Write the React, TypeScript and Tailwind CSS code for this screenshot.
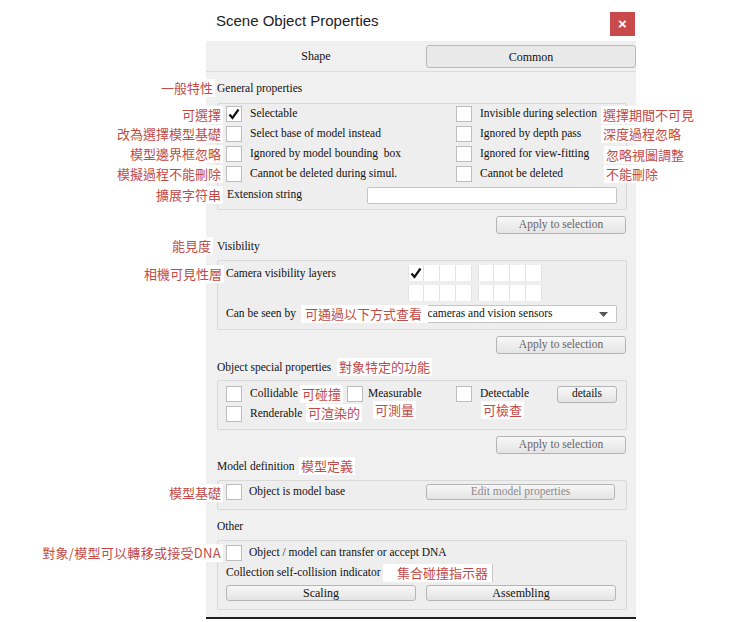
import { ReactNode } from "react";

function Check() {
  return (
    <svg width="12" height="12" viewBox="0 0 12 12">
      <path d="M1.5 6.5 L4.5 10 L10.5 1.5" fill="none" stroke="#111" strokeWidth="2.2" />
    </svg>
  );
}

function Box({ checked }: { checked?: boolean }) {
  return (
    <div className="w-4 h-4 shrink-0 bg-white border border-[#bdbdbd] flex items-center justify-center">
      {checked && <Check />}
    </div>
  );
}

function Btn({ children, className }: { children: ReactNode; className: string }) {
  return (
    <div
      className={
        "flex items-center justify-center border border-[#b4b4b4] rounded-[3px] bg-gradient-to-b from-[#f7f7f7] to-[#e4e4e4] leading-none " +
        className
      }
    >
      {children}
    </div>
  );
}

function Note({ children, className }: { children: ReactNode; className: string }) {
  return (
    <div
      className={
        "absolute bg-white text-[#c24b48] text-[13px] leading-[18px] px-[2px] whitespace-nowrap [font-family:'Noto_Sans_CJK_TC','Liberation_Sans',sans-serif] " +
        className
      }
    >
      {children}
    </div>
  );
}

function Layers() {
  const row = (first: boolean) => (
    <div className="flex gap-[6px]">
      {[0, 1].map((b) => (
        <div key={b} className="flex">
          {[0, 1, 2, 3].map((i) => (
            <div
              key={i}
              className="w-4 h-4 bg-white border-r border-[#e2e2e2] first:border-l flex items-center justify-center"
            >
              {first && b === 0 && i === 0 && <Check />}
            </div>
          ))}
        </div>
      ))}
    </div>
  );
  return (
    <div className="flex flex-col gap-[4px]">
      {row(true)}
      {row(false)}
    </div>
  );
}

export default function App() {
  const group = "border border-[#d9d9d9] rounded-[2px] bg-[#eeeeee]";
  return (
    <div className="relative w-[749px] h-[622px] bg-white overflow-hidden [font-family:'Liberation_Serif',serif] text-[11.5px] text-[#111]">
      <div className="ml-[206px] w-[430px] flex flex-col">
        <div className="h-[41px] flex items-start justify-between">
          <div className="pt-[11px] pl-[10px] text-[15px] leading-[20px] text-[#222] [font-family:'Liberation_Sans',sans-serif]">
            Scene Object Properties
          </div>
          <div className="mt-[12px] mr-px w-[25px] h-[24px] bg-[#c94a4b] text-white flex items-center justify-center text-[15px] font-bold [font-family:'Liberation_Sans',sans-serif]">
            ×
          </div>
        </div>

        <div className="bg-[#f0f0f0] border-b-2 border-[#1f1f1f] flex flex-col">
          <div className="h-[31px] flex border-b border-[#dcdcdc]">
            <div className="w-[220px] flex items-center justify-center text-[12px]">Shape</div>
            <Btn className="w-[210px] h-[23px] mt-[4px] text-[12px] bg-none bg-[#e9e9e9] border-[#b9b9b9]">
              Common
            </Btn>
          </div>

          <div className="pl-[11px] pr-[9px] flex flex-col">
            <div className="mt-[8px] h-[16px] leading-[16px]">General properties</div>
            <div className={group + " mt-[7px] h-[107px] pl-[8px] pr-[9px] flex flex-col"}>
              <div className="grid grid-cols-[230px_1fr]">
                <div className="h-[20px] flex items-center gap-[8px]"><Box checked />Selectable</div>
                <div className="h-[20px] flex items-center gap-[8px]"><Box />Invisible during selection</div>
                <div className="h-[20px] flex items-center gap-[8px]"><Box />Select base of model instead</div>
                <div className="h-[20px] flex items-center gap-[8px]"><Box />Ignored by depth pass</div>
                <div className="h-[20px] flex items-center gap-[8px]"><Box />Ignored by model bounding&nbsp; box</div>
                <div className="h-[20px] flex items-center gap-[8px]"><Box />Ignored for view-fitting</div>
                <div className="h-[20px] flex items-center gap-[8px]"><Box />Cannot be deleted during simul.</div>
                <div className="h-[20px] flex items-center gap-[8px]"><Box />Cannot be deleted</div>
              </div>
              <div className="h-[20px] mt-px flex items-center justify-between pl-px">
                <span>Extension string</span>
                <div className="w-[250px] h-[17px] bg-white border border-[#c4c4c4] rounded-[2px]" />
              </div>
            </div>
            <Btn className="self-end mr-px mt-[6px] w-[130px] h-[18px] text-[#666]">Apply to selection</Btn>

            <div className="mt-[4px] h-[16px] leading-[16px]">Visibility</div>
            <div className={group + " mt-[6px] h-[70px] pl-[8px] pr-[9px] pt-[4px] flex flex-col"}>
              <div className="flex">
                <div className="w-[182px] h-[16px] flex items-center mt-px">Camera visibility layers</div>
                <Layers />
              </div>
              <div className="mt-[4px] h-[18px] flex items-center justify-between">
                <span>Can be seen by</span>
                <div className="w-[212px] h-[18px] bg-white border border-[#c4c4c4] rounded-[2px] flex items-center justify-between pl-[4px] pr-[8px]">
                  <span>All cameras and vision sensors</span>
                  <svg width="9" height="5" viewBox="0 0 9 5">
                    <path d="M0 0 H9 L4.5 5 Z" fill="#555" />
                  </svg>
                </div>
              </div>
            </div>
            <Btn className="self-end mr-px mt-[6px] w-[130px] h-[18px] text-[#666]">Apply to selection</Btn>

            <div className="mt-[5px] h-[16px] leading-[16px]">Object special properties</div>
            <div className={group + " mt-[5px] h-[50px] pl-[8px] pr-[9px] pt-[3px] flex flex-col"}>
              <div className="h-[20px] flex items-center">
                <div className="w-[121px] flex items-center gap-[8px]"><Box />Collidable</div>
                <div className="w-[109px] flex items-center gap-[5px]"><Box />Measurable</div>
                <div className="w-[101px] flex items-center gap-[8px]"><Box />Detectable</div>
                <Btn className="w-[60px] h-[17px]">details</Btn>
              </div>
              <div className="h-[20px] flex items-center gap-[8px]"><Box />Renderable</div>
            </div>
            <Btn className="self-end mr-px mt-[6px] w-[130px] h-[18px] text-[#666]">Apply to selection</Btn>

            <div className="mt-[4px] h-[16px] leading-[16px]">Model definition</div>
            <div className={group + " mt-[6px] h-[30px] pl-[8px] pr-[11px] pt-px flex flex-col"}>
              <div className="h-[20px] flex items-center justify-between">
                <div className="flex items-center gap-[7px]"><Box />Object is model base</div>
                <Btn className="w-[189px] h-[16px] text-[#8a8a8a]">Edit model properties</Btn>
              </div>
            </div>

            <div className="mt-[8px] h-[16px] leading-[16px]">Other</div>
            <div className={group + " mt-[6px] h-[70px] pl-[8px] pr-[10px] pt-[2px] flex flex-col"}>
              <div className="h-[20px] flex items-center gap-[7px]"><Box />Object / model can transfer or accept DNA</div>
              <div className="h-[20px] flex items-center">Collection self-collision indicator</div>
              <div className="mt-[2px] flex gap-[10px]">
                <Btn className="flex-1 h-[16px] text-[12px]">Scaling</Btn>
                <Btn className="flex-1 h-[16px] text-[12px]">Assembling</Btn>
              </div>
            </div>
            <div className="h-[7px]" />
          </div>
        </div>
      </div>

      <Note className="top-[79px] right-[534px]">一般特性</Note>
      <Note className="top-[106px] right-[526px]">可選擇</Note>
      <Note className="top-[125px] right-[526px]">改為選擇模型基礎</Note>
      <Note className="top-[145px] right-[526px]">模型邊界框忽略</Note>
      <Note className="top-[165px] right-[526px]">模擬過程不能刪除</Note>
      <Note className="top-[186px] right-[526px]">擴展字符串</Note>
      <Note className="top-[237px] right-[536px]">能見度</Note>
      <Note className="top-[265px] right-[525px]">相機可見性層</Note>
      <Note className="top-[484px] right-[526px]">模型基礎</Note>
      <Note className="top-[544px] right-[526px] tracking-[0.3px]">對象/模型可以轉移或接受DNA</Note>

      <Note className="top-[106px] left-[601px]">選擇期間不可見</Note>
      <Note className="top-[125px] left-[601px]">深度過程忽略</Note>
      <Note className="top-[146px] left-[604px]">忽略視圖調整</Note>
      <Note className="top-[165px] left-[604px]">不能刪除</Note>

      <Note className="top-[305px] left-[301px] w-[127px] pl-[4px]">可通過以下方式查看</Note>
      <Note className="top-[358px] left-[337px]">對象特定的功能</Note>
      <Note className="top-[385px] left-[300px]">可碰撞</Note>
      <Note className="top-[401px] left-[373px]">可測量</Note>
      <Note className="top-[401px] left-[481px]">可檢查</Note>
      <Note className="top-[404px] left-[306px]">可渲染的</Note>
      <Note className="top-[457px] left-[299px]">模型定義</Note>
      <Note className="top-[564px] left-[383px] w-[110px] pl-[14px] border-r border-[#c4c4c4]">集合碰撞指示器</Note>
    </div>
  );
}
